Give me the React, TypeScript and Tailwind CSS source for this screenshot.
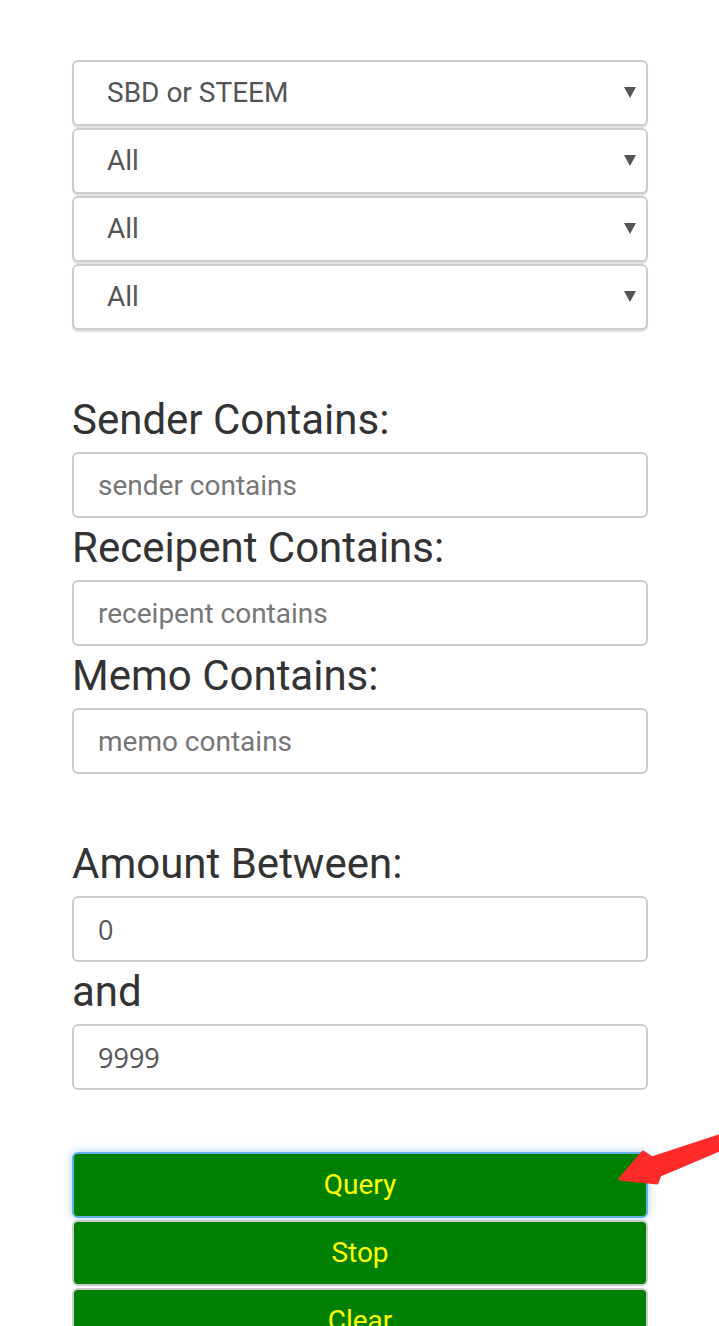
import React from 'react';

const font = { fontFamily: 'Roboto, "Liberation Sans", sans-serif' };

const selects = ['SBD or STEEM', 'All', 'All', 'All'];

function Caret() {
  return (
    <svg className="pointer-events-none absolute right-[12px] top-[26px]" width="12" height="12" viewBox="0 0 12 12">
      <polygon points="0,1 12,1 6,12" fill="#555" />
    </svg>
  );
}

function FieldLabel({ children }: { children: React.ReactNode }) {
  return <div className="h-[62px] text-[42px] leading-[60px] text-[#333]">{children}</div>;
}

function TextBox({ placeholder, value, mono }: { placeholder?: string; value?: string; mono?: boolean }) {
  return (
    <input
      type="text"
      readOnly
      placeholder={placeholder}
      defaultValue={value}
      style={mono ? { fontFamily: '"Open Sans", "DejaVu Sans", sans-serif' } : undefined}
      className={`block h-[66px] w-full rounded-[6px] border-2 border-[#ccc] bg-white px-[24px] text-[#555] placeholder:text-[#777] outline-none ${
        mono ? 'text-[27px]' : 'text-[28px]'
      }`}
    />
  );
}

export default function App() {
  return (
    <div className="relative min-h-screen bg-white" style={font}>
      <div className="ml-[72px] w-[576px] pt-[60px] pb-10">
        {/* Selects */}
        <div className="flex flex-col gap-[2px]">
          {selects.map((s, i) => (
            <div key={i} className="relative">
              <select
                defaultValue={s}
                className="block h-[66px] w-full appearance-none rounded-[6px] border-2 border-[#ccc] bg-white pl-[33px] text-[28px] text-[#555] shadow-[0_2px_1px_rgba(0,0,0,0.12)] outline-none"
                style={font}
              >
                <option>{s}</option>
              </select>
              <Caret />
            </div>
          ))}
        </div>

        <div className="h-[60px]" />
        <FieldLabel>Sender Contains:</FieldLabel>
        <TextBox placeholder="sender contains" />
        <FieldLabel>Receipent Contains:</FieldLabel>
        <TextBox placeholder="receipent contains" />
        <FieldLabel>Memo Contains:</FieldLabel>
        <TextBox placeholder="memo contains" />

        <div className="h-[60px]" />
        <FieldLabel>Amount Between:</FieldLabel>
        <TextBox value="0" mono />
        <FieldLabel>and</FieldLabel>
        <TextBox value="9999" mono />

        <div className="h-[62px]" />
        {/* Buttons */}
        <div className="flex flex-col gap-[2px]">
          <button className="h-[66px] w-full rounded-[6px] border-2 border-[#66afe9] bg-[#008000] text-[28px] text-[#ffff00] shadow-[0_0_10px_rgba(102,175,233,0.6)]">
            Query
          </button>
          <button className="h-[66px] w-full rounded-[6px] border-2 border-[#ccc] bg-[#008000] text-[28px] text-[#ffff00]">
            Stop
          </button>
          <button className="h-[66px] w-full rounded-[6px] border-2 border-[#ccc] bg-[#008000] text-[28px] text-[#ffff00]">
            Clear
          </button>
        </div>
      </div>

      {/* Red annotation arrow */}
      <svg className="pointer-events-none absolute left-[600px] top-[1130px]" width="119" height="70" viewBox="0 0 119 70">
        <polygon
          points="20,49 43,22 52,28 119,6 119,20 60,45 57,53"
          fill="#ff2a2a"
          stroke="#ff2a2a"
          strokeWidth="3"
          strokeLinejoin="round"
        />
      </svg>
    </div>
  );
}
